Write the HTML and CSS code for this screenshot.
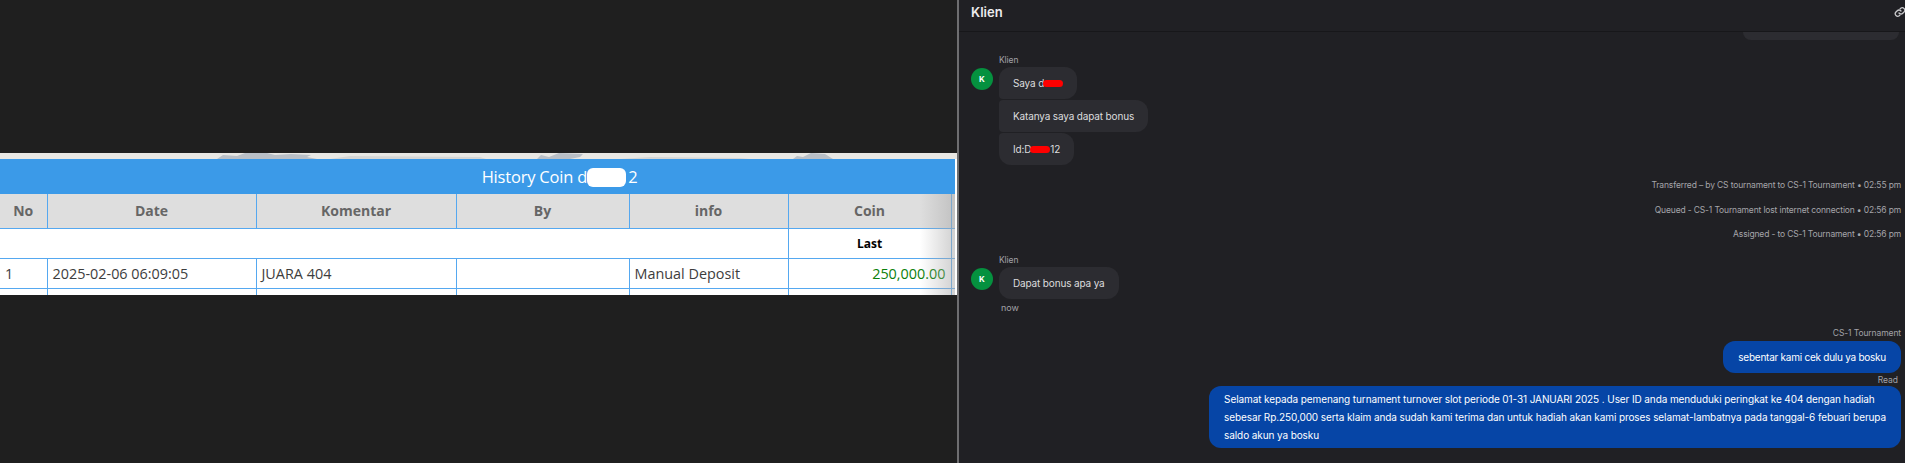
FILE: index.html
```html
<!DOCTYPE html>
<html lang="id">
<head>
  <meta charset="UTF-8" />
  <title>History Coin</title>
  <link rel="stylesheet" href="styles.css">
</head>
<body>
  <main class="kiri">
    <section class="kertas">
      <div class="peta">
        <svg width="957" height="6" viewBox="0 0 957 6">
          <path d="M217 6l6-4 14 1 8-3h22l8 2 16-1 20 1-4 2 10 2zM537 6l4-4 8 2 10-4 24 1-3 3-10 2zM793 6l4-3 6 1 8-4 14 1 8 5z" fill="#b9bfc6"/>
          <path d="M330 6l20-3 130 1 6 2zM620 6l30-2 90 1 10 1z" fill="#d4d5d4"/>
        </svg>
      </div>
      <h2 class="judul">History Coin d<span class="tutup"></span>2</h2>
      <table class="tabel">
        <colgroup>
          <col class="k-no"><col class="k-date"><col class="k-komentar"><col class="k-by"><col class="k-info"><col class="k-coin"><col class="k-sisa">
        </colgroup>
        <thead>
          <tr><th>No</th><th>Date</th><th>Komentar</th><th>By</th><th>info</th><th>Coin</th><th></th></tr>
        </thead>
        <tbody>
          <tr class="baris-last"><td colspan="5"></td><td class="last">Last</td><td></td></tr>
          <tr class="baris"><td>1</td><td>2025-02-06 06:09:05</td><td>JUARA 404</td><td></td><td>Manual Deposit</td><td class="coin">250,000.00</td><td></td></tr>
          <tr class="baris-kosong"><td></td><td></td><td></td><td></td><td></td><td></td><td></td></tr>
        </tbody>
      </table>
      <div class="bayang"></div>
    </section>
  </main>

  <aside class="chat">
    <header class="chat-head">
      <span class="chat-nama">Klien</span>
      <svg class="ikon-link" width="12" height="12" viewBox="0 0 24 24" fill="none" stroke="#c9c9cc" stroke-width="2.6" stroke-linecap="round">
        <path d="M10 14a5 5 0 0 0 7.5.5l3-3a5 5 0 0 0-7-7l-1.7 1.7"/>
        <path d="M14 10a5 5 0 0 0-7.5-.5l-3 3a5 5 0 0 0 7 7l1.7-1.7"/>
      </svg>
    </header>

    <div class="chat-isi">
      <div class="potongan"></div>

      <div class="grup grup-1">
        <div class="avatar">K</div>
        <div class="kolom">
          <p class="label">Klien</p>
          <div class="bubble awal">Saya d<span class="merah m1"></span></div>
          <div class="bubble">Katanya saya dapat bonus</div>
          <div class="bubble akhir">Id:D<span class="merah m2"></span>12</div>
        </div>
      </div>

      <div class="sistem">
        <p>Transferred – by CS tournament to CS-1 Tournament • 02:55 pm</p>
        <p>Queued - CS-1 Tournament lost internet connection • 02:56 pm</p>
        <p>Assigned - to CS-1 Tournament • 02:56 pm</p>
      </div>

      <div class="grup grup-2">
        <div class="avatar">K</div>
        <div class="kolom">
          <p class="label">Klien</p>
          <div class="bubble awal akhir">Dapat bonus apa ya</div>
          <p class="now">now</p>
        </div>
      </div>

      <div class="agen">
        <p class="label">CS-1 Tournament</p>
        <div class="bubble-agen pendek">sebentar kami cek dulu ya bosku</div>
        <p class="read">Read</p>
        <div class="bubble-agen panjang">Selamat kepada pemenang turnament turnover slot periode 01-31 JANUARI 2025 . User ID anda menduduki peringkat ke 404 dengan hadiah<br>sebesar Rp.250,000 serta klaim anda sudah kami terima dan untuk hadiah akan kami proses selamat-lambatnya pada tanggal-6 febuari berupa<br>saldo akun ya bosku</div>
      </div>
    </div>
  </aside>
</body>
</html>
```

FILE: styles.css
```css
* { box-sizing: border-box; }
html, body { height: 100%; }
body {
  margin: 0;
  display: flex;
  height: 463px;
  overflow: hidden;
  background-color: #1f1f1f;
  font-family: 'Inter', 'Liberation Sans', sans-serif;
}
p { margin: 0; }

/* kiri: tabel history */
.kiri {
  width: 957px;
  flex: none;
  padding-top: 153px;
}
.kertas {
  position: relative;
  height: 142px;
  background-color: #fff;
  overflow: hidden;
  font-family: 'Open Sans', 'Liberation Sans', sans-serif;
}
.peta {
  height: 6px;
  background-color: #e8e7e3;
}
.peta svg { display: block; }
.judul {
  margin: 0;
  width: 955px;
  height: 35px;
  padding-left: 164px;
  line-height: 35px;
  background-color: #3b9ae8;
  color: #fff;
  font-size: 16.5px;
  letter-spacing: -0.2px;
  font-weight: 400;
  text-align: center;
}
.tutup {
  display: inline-block;
  width: 39px;
  height: 19px;
  margin: 0 2px 0 0;
  vertical-align: -4px;
  background-color: #fff;
  border-radius: 6px;
}
.tabel {
  width: 955px;
  table-layout: fixed;
  border-collapse: collapse;
  font-size: 14.4px;
  color: #3d3d3d;
}
.k-no { width: 47px; }
.k-date { width: 209px; }
.k-komentar { width: 200px; }
.k-by { width: 173px; }
.k-info { width: 159px; }
.k-coin { width: 163px; }
.tabel th, .tabel td {
  border: 1px solid #55a8f0;
  padding: 0 5px;
}
.tabel tr > :first-child { border-left: 0; }
.tabel tr > :last-child { border-right: 0; }
.tabel th {
  height: 34px;
  background-color: #dedede;
  color: #666;
  font-size: 14px;
  font-weight: 700;
  border-top: 0;
}
.baris-last td { height: 30px; }
.baris td { height: 30px; }
.baris-kosong td { height: 12px; }
.last {
  text-align: center;
  font-size: 12px;
  font-weight: 700;
  color: #000;
}
.coin {
  text-align: right;
  padding-right: 6px;
  color: #0a800a;
}
.bayang {
  position: absolute;
  top: 41px;
  right: 2px;
  bottom: 0;
  width: 35px;
  background: linear-gradient(to right, rgba(170,170,170,0), rgba(170,170,170,0.55));
}

/* kanan: chat */
.chat {
  flex: 1;
  min-width: 0;
  border-left: 2px solid #6e6e70;
  background-color: #202024;
  color: #d8d8da;
  overflow: hidden;
}
.chat-head {
  height: 32px;
  padding: 4px 0 0 12px;
  display: flex;
  justify-content: space-between;
  align-items: flex-start;
  border-bottom: 1px solid #17171a;
}
.chat-nama {
  font-size: 13px;
  line-height: 16px;
  font-weight: 600;
  color: #ececee;
}
.ikon-link { flex: none; margin: 2px -1px 0 0; }
.chat-isi { padding: 0 4px 0 12px; }
.potongan {
  width: 156px;
  height: 8px;
  margin-left: auto;
  margin-right: 2px;
  background-color: #2c2c31;
  border-radius: 0 0 10px 10px;
}
.grup { display: flex; gap: 6px; }
.grup-1 { margin-top: 14px; }
.grup-2 { margin-top: 14px; }
.avatar {
  width: 22px;
  height: 22px;
  margin-top: 14px;
  flex: none;
  border-radius: 50%;
  background-color: #05913f;
  color: #fff;
  font-size: 8px;
  font-weight: 700;
  line-height: 22px;
  text-align: center;
}
.kolom {
  display: flex;
  flex-direction: column;
  align-items: flex-start;
  gap: 1px;
}
.label {
  font-size: 8.5px;
  line-height: 12px;
  letter-spacing: -0.1px;
  color: #a2a2a8;
}
.bubble {
  height: 32px;
  padding: 0 14px;
  line-height: 32px;
  font-size: 10px;
  letter-spacing: -0.15px;
  background-color: #2c2c31;
  color: #dcdcde;
  border-radius: 4px 12px 12px 4px;
}
.awal { border-top-left-radius: 12px; }
.akhir { border-bottom-left-radius: 12px; }
.merah {
  display: inline-block;
  height: 7px;
  vertical-align: 0;
  background-color: #f00;
  border-radius: 4px;
}
.m1 { width: 20px; margin-left: -1px; }
.m2 { width: 20px; margin: 0 0 0 -1px; }
.now {
  margin: 2px 0 0 2px;
  font-size: 9px;
  line-height: 12px;
  color: #a2a2a8;
}
.sistem {
  margin-top: 14px;
  text-align: right;
  font-size: 8.5px;
  line-height: 12px;
  letter-spacing: -0.15px;
  color: #a5a5aa;
}
.sistem p { margin-top: 12.5px; }
.agen {
  margin-top: 13px;
  display: flex;
  flex-direction: column;
  align-items: flex-end;
}
.agen .label { margin-bottom: 2px; }
.bubble-agen {
  padding: 0 15px;
  height: 32px;
  line-height: 32px;
  font-size: 10px;
  letter-spacing: -0.1px;
  background-color: #0645a6;
  color: #fff;
  border-radius: 12px;
}
.pendek { letter-spacing: -0.25px; }
.read {
  margin: 1px 3px 0 0;
  font-size: 8.5px;
  line-height: 12px;
  color: #a2a2a8;
}
.panjang {
  height: 62px;
  padding: 4px 15px;
  line-height: 18px;
}
```
